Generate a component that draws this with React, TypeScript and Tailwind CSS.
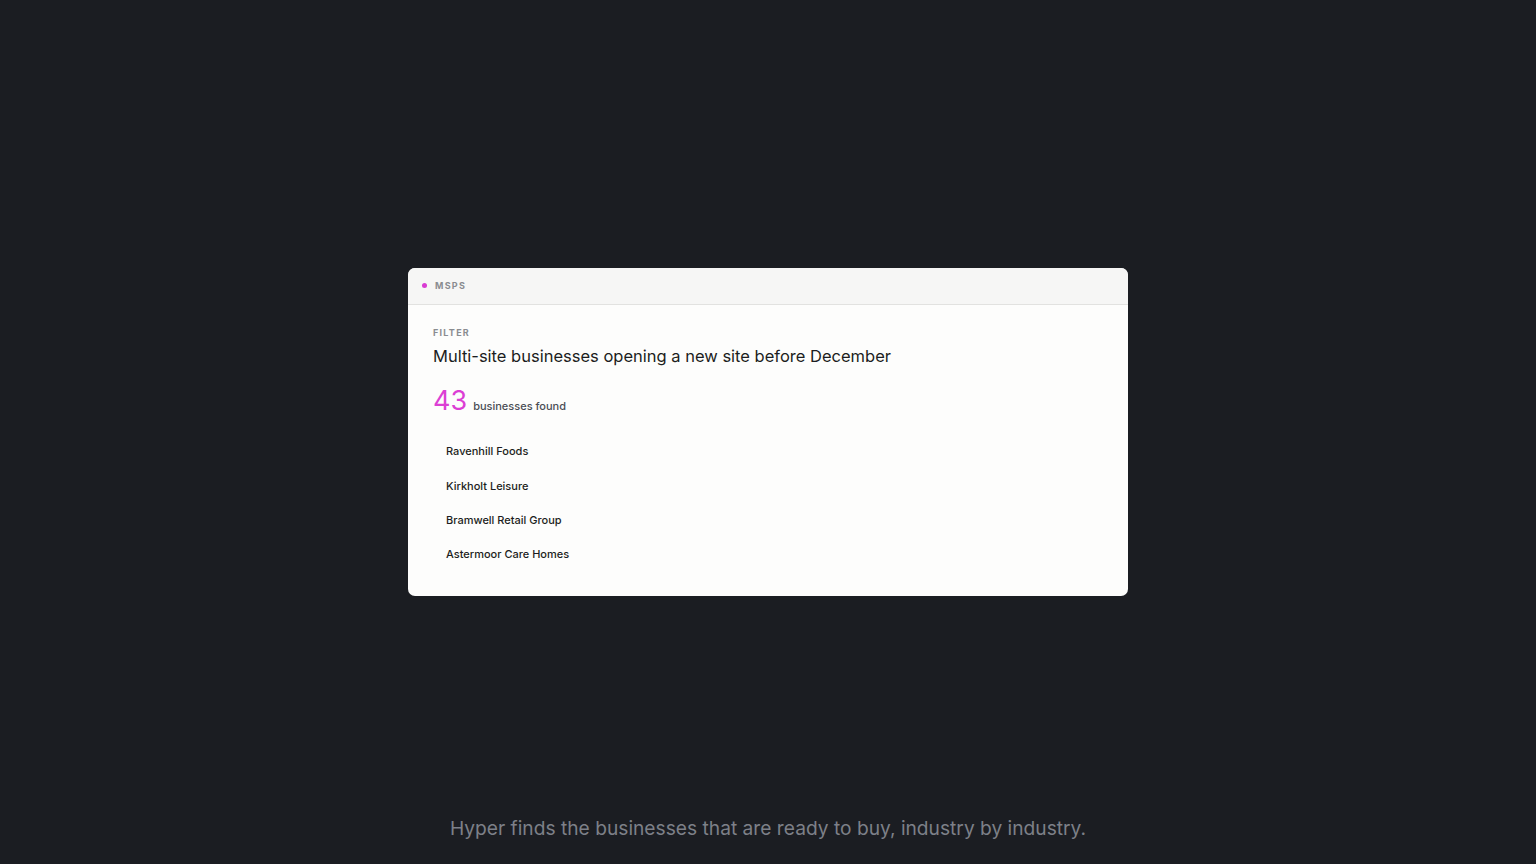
import React from "react";

const businesses = [
  "Ravenhill Foods",
  "Kirkholt Leisure",
  "Bramwell Retail Group",
  "Astermoor Care Homes",
];

export default function App() {
  return (
    <div
      className="grid h-screen w-full grid-rows-[1fr_auto_1fr] bg-[#1b1d22]"
      style={{ fontFamily: "Inter, 'Liberation Sans', sans-serif" }}
    >
      <div />
      <div className="flex justify-center">
        <div className="w-[720px] overflow-hidden rounded-[7px] bg-[#fdfdfc]">
          <div className="flex h-[37px] items-center gap-[8px] border-b border-[#e2e2e0] bg-[#f6f6f5] pl-[14px]">
            <span className="h-[5px] w-[5px] rounded-full bg-[#d93bd3]" />
            <span className="text-[9px] font-bold tracking-[0.14em] text-[#8a8c90]">MSPS</span>
          </div>
          <div className="px-[25px] pb-[33px] pt-[21px]">
            <div className="text-[9px] font-bold tracking-[0.14em] text-[#8a8c90]">FILTER</div>
            <h2 className="mt-[5px] text-[16.5px] font-normal leading-[24px] text-[#1c1d21]">
              Multi-site businesses opening a new site before December
            </h2>
            <div className="mt-[16px] flex items-baseline gap-[6px]">
              <span className="text-[27px] leading-[34px] text-[#dc3fd4]">43</span>
              <span className="text-[11px] font-medium text-[#4a4d55]">businesses found</span>
            </div>
            <ul className="mt-[25px] flex flex-col gap-[17.4px] pl-[13px]">
              {businesses.map((b) => (
                <li key={b} className="text-[11px] font-medium leading-[17px] text-[#1c1d21]">
                  {b}
                </li>
              ))}
            </ul>
          </div>
        </div>
      </div>
      <div className="flex items-end justify-center pb-[24px]">
        <p className="text-[19.2px] leading-[24px] text-[#7d8088]">
          Hyper finds the businesses that are ready to buy, industry by industry.
        </p>
      </div>
    </div>
  );
}
